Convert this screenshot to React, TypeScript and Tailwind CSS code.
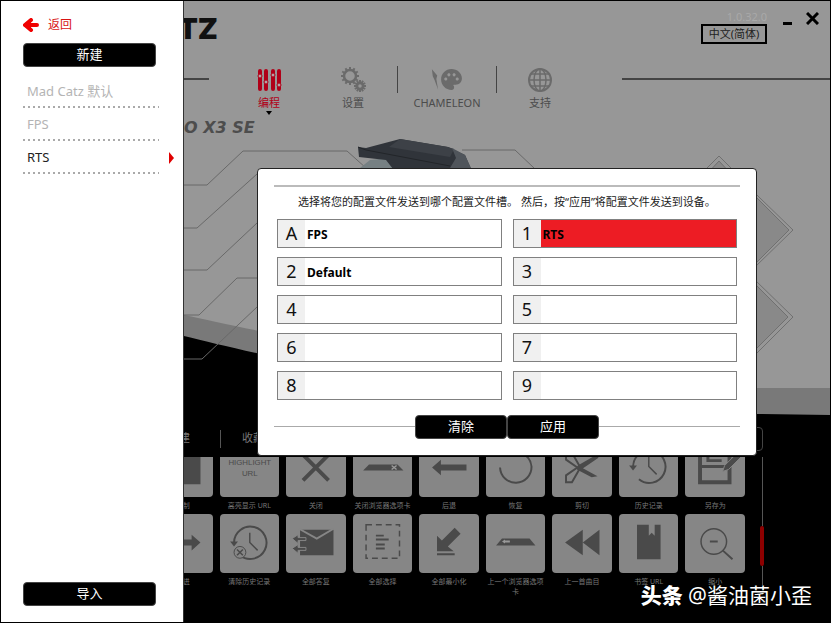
import React from 'react'
import { MdPalette } from 'react-icons/md'

const profiles = [
    { name: 'Mad Catz 默认', active: false },
    { name: 'FPS', active: false },
    { name: 'RTS', active: true },
]

const slots = [
    { id: 'A', name: 'FPS' },
    { id: '1', name: 'RTS' },
    { id: '2', name: 'Default' },
    { id: '3', name: '' },
    { id: '4', name: '' },
    { id: '5', name: '' },
    { id: '6', name: '' },
    { id: '7', name: '' },
    { id: '8', name: '' },
    { id: '9', name: '' },
]

const History = () => (
    <g fill="none" stroke="currentColor" strokeWidth="2">
        <path d="M14 29a16.500 16.500 0 1 1 6 13" />
        <path d="M30 19v10l8 8" strokeWidth="1.500" />
        <path d="M10 28h8l-4 5z" fill="currentColor" stroke="none" />
    </g>
)

const topTiles = [
    { label: '复制', icon: <path d="M17 16h31v31H17z" fill="currentColor" /> },
    {
        label: '高亮显示 URL',
        icon: (
            <g fill="currentColor" textAnchor="middle" fontFamily="'Liberation Sans Narrow', 'Liberation Sans', sans-serif">
                <text x="30" y="27" fontSize="8">HIGHLIGHT</text>
                <text x="30" y="39" fontSize="8">URL</text>
            </g>
        ),
    },
    { label: '关闭', icon: <path d="M17 17l26 26M43 17L17 43" stroke="currentColor" strokeWidth="4" /> },
    {
        label: '关闭浏览器选项卡',
        icon: (
            <>
                <path d="M10 33l6-6h29l6 6z" fill="currentColor" />
                <path d="M39 28l5 4M44 28l-5 4" stroke="#999" strokeWidth="1.500" />
            </>
        ),
    },
    { label: '后退', icon: <path d="M13 30l9-8v5h26v6H22v5z" fill="currentColor" /> },
    { label: '恢复', icon: <path d="M14 30a16 16 0 1 0 32-1a16 16 0 0 0-7-12" fill="none" stroke="currentColor" strokeWidth="2" /> },
    {
        label: '剪切',
        icon: (
            <>
                <path d="M26 28L45 17l2 3-19 13zM26 28l20 11-6 1-15-8z" fill="currentColor" />
                <path d="M27 29l-13 9v7h6l8-14M27 31l-13-9v-7h6l8 14" fill="none" stroke="currentColor" strokeWidth="2" />
            </>
        ),
    },
    { label: '历史记录', icon: <History /> },
    {
        label: '另存为',
        icon: (
            <>
                <path d="M15 14h30v31H15z" fill="none" stroke="currentColor" strokeWidth="4" />
                <path d="M15 29h30M23 14v9h14" fill="none" stroke="currentColor" strokeWidth="3" />
                <path d="M38 34l2-6L53 15l4 4-13 13z" fill="currentColor" stroke="#868686" />
            </>
        ),
    },
]

const bottomTiles = [
    { label: '前进', icon: <path d="M48 29l-9-8v5H13v6h26v5z" fill="currentColor" /> },
    {
        label: '清除历史记录',
        icon: (
            <>
                <History />
                <circle cx="20" cy="39" r="6" fill="#868686" stroke="currentColor" />
                <path d="M17 36l6 6M23 36l-6 6" stroke="currentColor" strokeWidth="1.500" />
            </>
        ),
    },
    {
        label: '全部答复',
        icon: (
            <>
                <path d="M14 16h34v26H14z" fill="currentColor" />
                <path d="M13 15l18 10 17-10" fill="none" stroke="#868686" strokeWidth="2" />
                <path d="M6 25l6-4v3h8v3h-8v3zM6 35l6-4v3h8v3h-8v3z" fill="currentColor" stroke="#868686" />
            </>
        ),
    },
    {
        label: '全部选择',
        icon: (
            <g fill="none" stroke="currentColor">
                <path d="M13 11h34v34H13z" strokeDasharray="6 4" strokeWidth="1.500" />
                <path d="M23 22h8M23 26h13M23 31h9M23 35h9" strokeWidth="2" />
            </g>
        ),
    },
    { label: '全部最小化', icon: <path d="M18 22l5 5 13-13 6 6-13 13 6 5H18zM18 40h18v2H18z" fill="currentColor" /> },
    {
        label: '上一个浏览器选项卡',
        icon: (
            <>
                <path d="M10 32l6-7h28l6 7z" fill="currentColor" />
                <path d="M16 28l3-2v1h5v2h-5v1z" fill="#999" />
            </>
        ),
    },
    { label: '上一首曲目', icon: <path d="M13 29l18-13v26zM31 29l17-13v26z" fill="currentColor" /> },
    { label: '书签 URL', icon: <path d="M18 11h12v11l3-3 3 3V11h6v35H18z" fill="currentColor" /> },
    {
        label: '缩小',
        icon: (
            <g fill="none" stroke="currentColor" strokeWidth="2">
                <circle cx="29" cy="28" r="13" strokeWidth="1.500" />
                <path d="M25 28h8M38 37l10 9" />
            </g>
        ),
    },
]

const Backdrop = () => (
    <svg className="absolute inset-0 h-full w-full" viewBox="184 1 646 621" preserveAspectRatio="none" aria-hidden="true">
        <path d="M184 315C280 336 520 388 758 388H830V622H184z" fill="#797979" />
        <path d="M184 336C280 360 500 410 758 414L830 415V622H184z" fill="#000" />
        <g fill="none" stroke="#696969">
            <path d="M184 185h23l36-34h104l19 17" />
            <path d="M184 228h13l60-54" />
            <path d="M184 270h23l50-47" />
            <path d="M184 315h15l38-37h20" />
            <path d="M184 359h18l55-52" />
            <path d="M462 150h53l19 18" />
        </g>
        <g fill="none" stroke="#707070">
            <path d="M702 173l17-17 17 17" />
            <path d="M706 175l13-14 13 14" fill="#898989" />
            <path d="M755 193l5 5 33 32-38 37" />
            <path d="M755 196l34 34-34 34" fill="#898989" />
            <path d="M755 280l38 37-38 38" />
            <path d="M755 284l33 33-33 33" fill="#898989" />
        </g>
        <path d="M360 168l10-8 18-2 12 10z" fill="#768083" />
        <path d="M358 147l8 1 34-9 48 8 17 8 6 14h-78l-7-9-27-3z" fill="#30343a" />
        <path d="M400 139l48 8 6 2-4 8-61-10z" fill="#3d4147" />
        <path d="M452 148l13 7 6 13h-21l6-10z" fill="#50555b" />
        <path d="M358 147l8 3 84 16" fill="none" stroke="#222529" />
    </svg>
)

const Tile = ({ label, icon, cut = false }: { label: string; icon: React.ReactNode; cut?: boolean }) => (
    <button className="flex min-w-0 flex-col text-center text-[7px] leading-[10px] text-[#777]">
        <span className={`flex w-full items-end overflow-hidden bg-[#868686] text-[#4a4a4a] ${cut ? 'h-10 rounded-b' : 'h-[59px] rounded'}`}>
            <svg viewBox="0 0 60 60" className="h-[59px] w-full shrink-0">{icon}</svg>
        </span>
        <span className="mt-1 w-full">{label}</span>
    </button>
)

const Sidebar = () => (
    <aside className="z-10 flex w-[183px] shrink-0 flex-col border-r border-[#333] bg-white pt-4 pb-4 pl-[22px] pr-[9px] text-[13px]">
        <button className="flex h-4 items-center gap-[9px] self-start text-[#d81313]">
            <svg width="16" height="14" viewBox="0 0 16 14">
                <path d="M2 7l6-5M2 7l6 5M3 7h11" stroke="#f00000" strokeWidth="4" strokeLinecap="round" fill="none" />
                <path d="M2 7l6-5v10z" fill="#f00000" />
            </svg>
            <span className="text-[12px]">返回</span>
        </button>
        <button className="mt-[10px] mr-[18px] h-6 rounded-sm border border-[#444] bg-black text-white">新建</button>
        <nav className="mt-2">
            {profiles.map((profile) => (
                <button key={profile.name} className="flex h-[33px] w-full items-center justify-between text-left">
                    <span className={`flex h-full w-[136px] flex-col justify-between pt-[6px] ${profile.active ? 'text-[#222]' : 'text-[#b4b4b4]'}`}>
                        <span className="pl-1 leading-[20px]">{profile.name}</span>
                        <svg width="100%" height="2"><path d="M0 1h136" stroke="#aaa" strokeWidth="2" strokeDasharray="2 3" /></svg>
                    </span>
                    {profile.active && (
                        <svg width="5" height="12" viewBox="0 0 5 12"><path d="M0 0l5 6-5 6z" fill="#e00000" /></svg>
                    )}
                </button>
            ))}
        </nav>
        <button className="mt-auto mr-[18px] h-6 rounded-sm border border-[#444] bg-black text-white">导入</button>
    </aside>
)

const Header = () => (
    <header className="flex h-[65px] items-start justify-between">
        <div className="mt-3 flex w-[34px] justify-end overflow-hidden font-[family-name:Inter] text-[29px] leading-[32px] font-black text-[#111]">TZ</div>
        <div className="flex items-start pr-[11px] pt-[9px]">
            <div className="flex flex-col items-end">
                <span className="text-[11px] leading-[14px] text-[#a9a9a9]">1.0.32.0</span>
                <button className="h-5 w-[66px] border-2 border-black text-[11px] leading-[16px] text-[#222]">中文(简体)</button>
            </div>
            <button aria-label="Minimize" className="mt-3 ml-4">
                <svg width="9" height="3"><path d="M0 0h9v3H0z" /></svg>
            </button>
            <button aria-label="Close" className="mt-[2px] ml-[14px]">
                <svg width="13" height="13"><path d="M1 1l11 11M12 1L1 12" stroke="#000" strokeWidth="3" /></svg>
            </button>
        </div>
    </header>
)

const gearTeeth = [0, 30, 60, 90, 120, 150, 180, 210, 240, 270, 300, 330]

const Gear = ({ cx, cy, r }: { cx: number; cy: number; r: number }) => (
    <g transform={`translate(${cx} ${cy})`} fill="none" stroke="currentColor">
        <circle r={r} strokeWidth="2.500" />
        {gearTeeth.map((angle) => (
            <path key={angle} d={`M0 ${-r}v-3`} strokeWidth="2" transform={`rotate(${angle})`} />
        ))}
    </g>
)

const Navigation = () => (
    <nav className="flex items-start text-[11px] leading-[14px] text-[#4c4c4c]">
        <span className="mt-3 h-[2px] w-[25px] bg-[#444]" />
        <button className="ml-[18px] flex w-[84px] flex-col items-center text-[#b00018]">
            <svg width="25" height="26" viewBox="0 0 25 26" className="text-[#b00018]">
                <path d="M3 5v18M9 5v18M16 5v18M22 5v18" stroke="currentColor" strokeWidth="4" strokeLinecap="round" />
                <g fill="#b8a0a3" stroke="currentColor">
                    <circle cx="3" cy="10" r="2" /><circle cx="9" cy="16" r="2" />
                    <circle cx="16" cy="9" r="2" /><circle cx="22" cy="19" r="2" />
                </g>
            </svg>
            <span className="mt-1">编程</span>
            <svg width="6" height="4" className="mt-px"><path d="M0 0h6L3 4z" /></svg>
        </button>
        <button className="flex w-[84px] flex-col items-center">
            <svg width="25" height="26" viewBox="0 0 25 26" className="text-[#6b6b6b]">
                <Gear cx={9} cy={10} r={6} />
                <Gear cx={19} cy={20} r={3} />
            </svg>
            <span className="mt-1">设置</span>
        </button>
        <span className="ml-[2px] h-[27px] w-px bg-[#444]" />
        <button className="flex w-[98px] flex-col items-center">
            <span className="flex h-[26px] items-center text-[#6b6b6b]">
                <svg width="8" height="24" viewBox="0 0 9 24" fill="currentColor"><path d="M1 1l6 7-1 4 2 12-4-11-2-4z" /></svg>
                <MdPalette size={25} />
            </span>
            <span className="mt-1">CHAMELEON</span>
        </button>
        <span className="h-[27px] w-px bg-[#444]" />
        <button className="flex w-[86px] flex-col items-center">
            <svg width="26" height="26" viewBox="0 0 26 26" fill="none" stroke="#6b6b6b" strokeWidth="1.500">
                <circle cx="13" cy="14" r="11" strokeWidth="2" />
                <ellipse cx="13" cy="14" rx="6" ry="11" />
                <path d="M13 3v22M2 14h22M4 8h18M4 20h18" />
            </svg>
            <span className="mt-1">支持</span>
        </button>
        <span className="mt-3 ml-[39px] h-[2px] flex-1 bg-[#444]" />
    </nav>
)

const Commands = () => (
    <section className="mt-auto">
        <div className="flex h-[37px] items-center pr-[67px] text-[11px] text-[#777]">
            <span className="flex w-[6px] justify-end overflow-hidden">建</span>
            <span className="mx-[30px] h-[18px] w-px bg-[#555]" />
            <button className="ml-[-9px]">收藏</button>
            <span className="ml-auto h-6 w-10 rounded-sm border border-[#444]" />
        </div>
        <div className="flex h-[165px] items-start overflow-hidden">
            <div className="ml-[-31px] min-w-0 flex-1">
                <div className="grid h-[57px] grid-cols-9 gap-x-[7px]">
                    {topTiles.map((tile) => <Tile key={tile.label} {...tile} cut />)}
                </div>
                <div className="grid grid-cols-9 items-start gap-x-[7px]">
                    {bottomTiles.map((tile) => <Tile key={tile.label} {...tile} />)}
                </div>
            </div>
            <div className="mr-[66px] ml-[15px] flex h-32 w-1 flex-col items-center">
                <span className="h-[69px] w-px bg-[#555]" />
                <span className="h-10 w-1 rounded-sm bg-[#8d0000]" />
                <span className="w-px flex-1 bg-[#555]" />
            </div>
        </div>
    </section>
)

const SlotDialog = () => (
    <div className="absolute inset-0 flex items-center justify-center">
        <div role="dialog" aria-labelledby="slot-hint" className="w-full max-w-[500px] rounded-sm border border-[#222] bg-white px-[19px] pt-4 pb-4">
            <div className="mx-[-3px] h-[2px] bg-[#bbb]" />
            <p id="slot-hint" className="mt-[6px] text-center text-[11px] leading-[18px] whitespace-nowrap text-[#222]">
                选择将您的配置文件发送到哪个配置文件槽。 然后，按“应用”将配置文件发送到设备。
            </p>
            <div className="mt-2 grid grid-cols-2 gap-x-[11px] gap-y-[9px]">
                {slots.map((slot) => (
                    <button key={slot.id} className="flex h-[29px] border border-[#808080] text-left">
                        <span className="flex h-full w-[27px] items-center justify-center bg-[#f0f0f0] pt-px text-[18px] text-[#111]">{slot.id}</span>
                        <span className={`flex h-full flex-1 items-center pt-1 pl-[2px] text-[12px] font-bold text-black ${slot.name === 'RTS' ? 'bg-[#ed1c24]' : ''}`}>
                            {slot.name}
                        </span>
                    </button>
                ))}
            </div>
            <div className="mx-[-3px] mt-[15px] flex items-center text-[13px] text-white">
                <span className="h-px flex-1 bg-[#aaa]" />
                <button className="h-6 w-[92px] rounded-sm border border-[#444] bg-black">清除</button>
                <button className="h-6 w-[92px] rounded-sm border border-[#444] bg-black">应用</button>
                <span className="h-px flex-1 bg-[#aaa]" />
            </div>
        </div>
    </div>
)

const App = () => {
    return (
        <div className="flex min-h-screen border border-black bg-[#979797] font-['Noto_Sans','Noto_Sans_CJK_SC',sans-serif]">
            <Sidebar />
            <main className="relative flex min-w-0 flex-1 flex-col overflow-hidden">
                <Backdrop />
                <div className="relative flex flex-1 flex-col">
                    <Header />
                    <Navigation />
                    <h1 className="mt-[3px] font-[family-name:DejaVu_Sans] text-[16px] leading-[20px] font-bold text-[#4d4d4d] italic">O X3 SE</h1>
                    <Commands />
                </div>
                <SlotDialog />
                <p className="absolute right-[18px] bottom-3 text-[21px] leading-[30px] text-white">
                    <b className="font-black">头条</b> @酱油菌小歪
                </p>
            </main>
        </div>
    )
}

export default App
